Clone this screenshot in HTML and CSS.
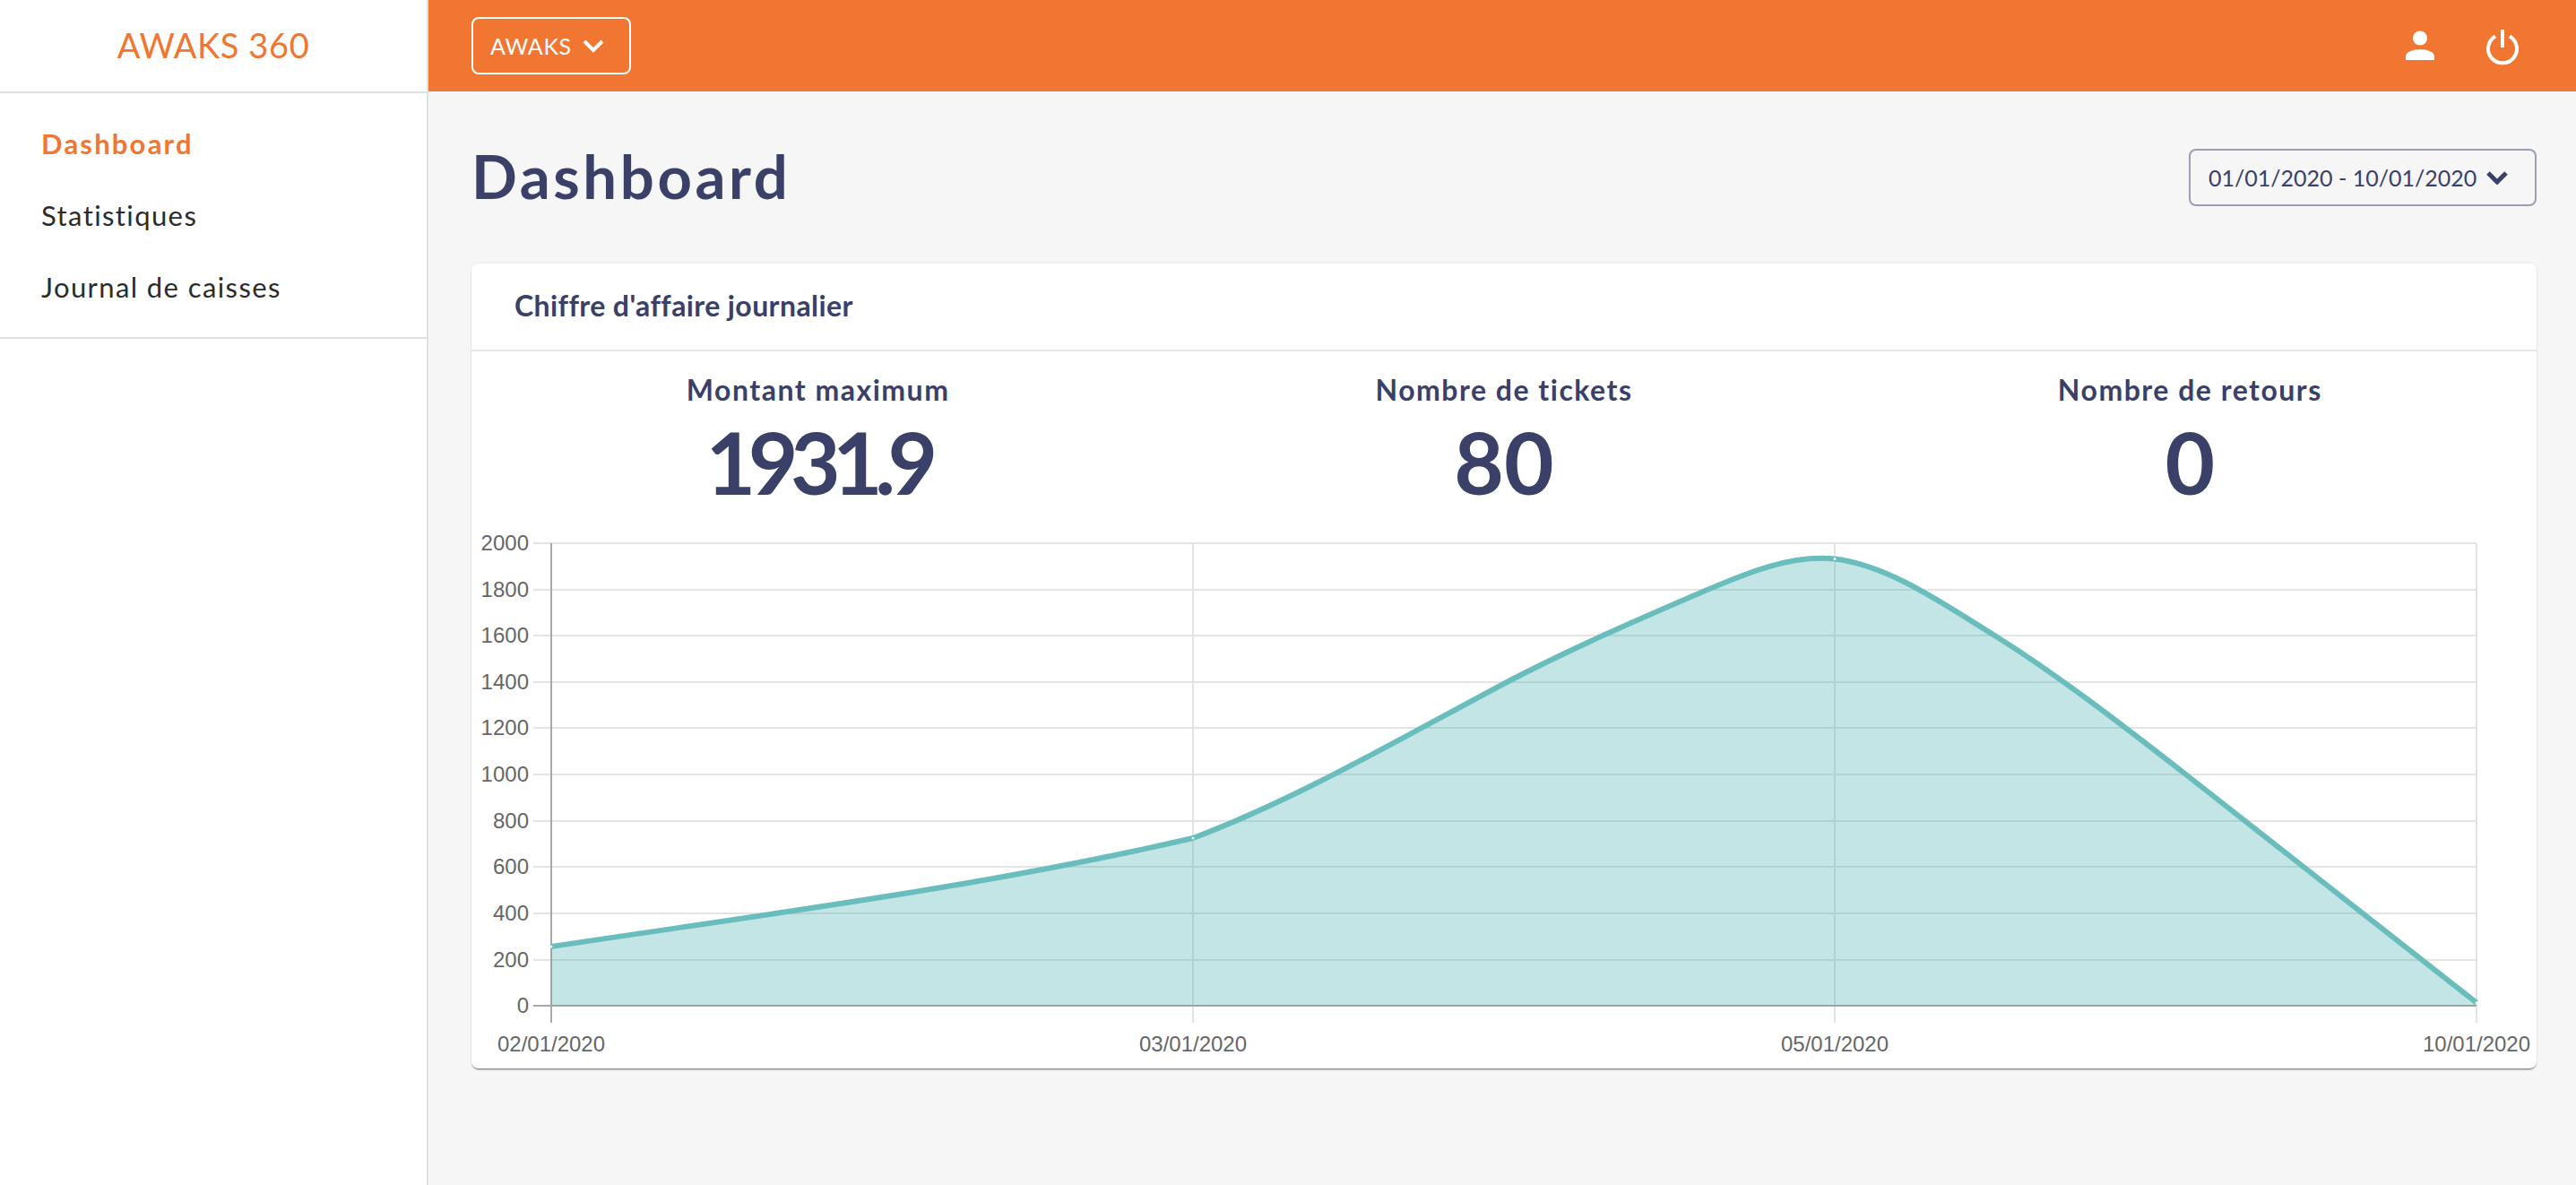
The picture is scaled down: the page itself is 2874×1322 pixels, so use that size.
FILE: index.html
```html
<!DOCTYPE html>
<html lang="fr">
<head>
    <meta charset="UTF-8">
    <meta name="viewport" content="width=device-width, initial-scale=1.0">
    <title>AWAKS 360</title>
    <link rel="stylesheet" href="styles.css">
</head>
<body>
    <aside class="sidebar">
        <div class="brand">AWAKS 360</div>
        <ul class="side-nav">
            <li class="active"><a href="#">Dashboard</a></li>
            <li><a href="#">Statistiques</a></li>
            <li><a href="#">Journal de caisses</a></li>
        </ul>
    </aside>
    <div class="page">
        <header class="topbar">
            <button class="shop-btn" type="button">AWAKS
                <svg class="chevron" viewBox="0 0 24 16"><path d="M2 3l10 10L22 3"/></svg>
            </button>
            <div class="top-icons">
                <svg class="icon-user" viewBox="0 0 32 34"><circle cx="16" cy="8.5" r="8"/><path d="M0 33v-4c0-5 8-8 16-8s16 3 16 8v4z"/></svg>
                <svg class="icon-power" viewBox="0 0 36 36"><path d="M10 7.5a16 16 0 1 0 16 0"/><path d="M18 0v20"/></svg>
            </div>
        </header>
        <main class="content">
            <div class="page-head">
                <h1>Dashboard</h1>
                <button class="date-btn" type="button">01/01/2020 - 10/01/2020
                    <svg class="chevron" viewBox="0 0 24 16"><path d="M2 3l10 10L22 3"/></svg>
                </button>
            </div>
            <section class="card">
                <h2>Chiffre d'affaire journalier</h2>
                <div class="stats">
                    <div class="stat"><p>Montant maximum</p><strong class="tight">1931.9</strong></div>
                    <div class="stat"><p>Nombre de tickets</p><strong>80</strong></div>
                    <div class="stat"><p>Nombre de retours</p><strong>0</strong></div>
                </div>
                <svg class="chart" viewBox="526 586 2304 606">
                    <g class="grid">
                        <path d="M595 606H2763M595 658H2763M595 709H2763M595 761H2763M595 812H2763M595 864H2763M595 916H2763M595 967H2763M595 1019H2763M595 1071H2763"/>
                        <path d="M1331 606V1141M2047 606V1141M2763 606V1141"/>
                    </g>
                    <path class="axis" d="M615 606V1141M595 1122H2763"/>
                    <path class="area" d="M615 1056C854 1020 1092 990 1331 935C1448 891 1566 822 1683 760C1755 722.6 1828 691 1900 660C1949 639 1998 618.6 2047 623.5C2107 630.7 2167 672.8 2227 710C2298 754.7 2369 809.6 2440 865L2763 1118.7V1122H615Z"/>
                    <path class="line" d="M615 1056C854 1020 1092 990 1331 935C1448 891 1566 822 1683 760C1755 722.6 1828 691 1900 660C1949 639 1998 618.6 2047 623.5C2107 630.7 2167 672.8 2227 710C2298 754.7 2369 809.6 2440 865L2763 1118.7"/>
                    <g class="dots">
                        <circle cx="615" cy="1056" r="1.5"/>
                        <circle cx="1331" cy="935" r="1.5"/>
                        <circle cx="2047" cy="623.5" r="1.5"/>
                        <circle cx="2763" cy="1118.7" r="1.5"/>
                    </g>
                    <g class="y-labels">
                        <text x="590" y="614">2000</text>
                        <text x="590" y="666">1800</text>
                        <text x="590" y="717">1600</text>
                        <text x="590" y="769">1400</text>
                        <text x="590" y="820">1200</text>
                        <text x="590" y="872">1000</text>
                        <text x="590" y="924">800</text>
                        <text x="590" y="975">600</text>
                        <text x="590" y="1027">400</text>
                        <text x="590" y="1079">200</text>
                        <text x="590" y="1130">0</text>
                    </g>
                    <g class="x-labels">
                        <text x="615" y="1173">02/01/2020</text>
                        <text x="1331" y="1173">03/01/2020</text>
                        <text x="2047" y="1173">05/01/2020</text>
                        <text x="2763" y="1173">10/01/2020</text>
                    </g>
                </svg>
            </section>
        </main>
    </div>
</body>
</html>
```

FILE: styles.css
```css
* { box-sizing: border-box; }
html, body { height: 100%; }
body { margin: 0; display: flex; overflow: hidden; font-family: Lato, "Open Sans", sans-serif; background-color: #f6f6f6; color: #3a4067; }
button { font-family: inherit; background: none; cursor: pointer; padding: 0; }

/* sidebar */
.sidebar { width: 478px; flex: none; background-color: white; border-right: 2px solid #e0e0e0; }
.brand { height: 104px; padding-bottom: 2px; border-bottom: 2px solid #e0e0e0; display: flex; align-items: center; justify-content: center; color: #f07631; font-size: 38px; font-weight: 400; letter-spacing: .6px; }
.side-nav { list-style: none; margin: 0; padding: 16px 0; border-bottom: 2px solid #e0e0e0; }
.side-nav li { height: 80px; padding-left: 46px; display: flex; align-items: center; }
.side-nav a { color: #2b2b2b; font-size: 31px; font-weight: 400; letter-spacing: 1.4px; text-decoration: none; }
.side-nav .active a { color: #f07631; font-weight: 700; letter-spacing: 2.2px; }

/* top bar */
.page { flex: 1; min-width: 0; }
.topbar { height: 102px; padding: 0 64px 0 48px; background-color: #f07631; display: flex; align-items: center; justify-content: space-between; }
.shop-btn { width: 178px; height: 64px; padding-left: 19px; border: 2px solid white; border-radius: 8px; color: white; font-size: 25px; letter-spacing: .6px; display: flex; align-items: center; gap: 12px; }
.shop-btn .chevron { stroke: white; }
.chevron { width: 24px; height: 16px; flex: none; fill: none; stroke: #3a4067; stroke-width: 4; }
.top-icons { display: flex; align-items: center; gap: 58px; }
.icon-user { width: 32px; height: 34px; fill: white; }
.icon-power { width: 36px; height: 36px; fill: none; stroke: white; stroke-width: 4; overflow: visible; }

/* content */
.content { padding: 64px 44px 0 48px; }
.page-head { height: 64px; margin-bottom: 64px; display: flex; align-items: center; justify-content: space-between; }
h1 { margin: 0 0 4px; font-size: 67px; font-weight: 700; letter-spacing: 3.6px; }
.date-btn { width: 388px; height: 64px; padding-left: 20px; border: 2px solid #9a9eb4; border-radius: 8px; color: #3a4067; font-size: 25px; white-space: nowrap; display: flex; align-items: center; gap: 11px; }
.date-btn .chevron { stroke-width: 5; }

.card { height: 898px; background-color: white; border-radius: 8px; box-shadow: 0 2px 2px -1px rgba(0, 0, 0, .6), 0 0 4px rgba(0, 0, 0, .06); overflow: hidden; }
.card h2 { height: 98px; margin: 0; padding: 0 0 3px 48px; border-bottom: 2px solid #e4e4ea; display: flex; align-items: center; font-size: 32px; font-weight: 700; letter-spacing: .4px; }
.stats { height: 194px; padding: 23px 4px 0; display: grid; grid-template-columns: 1fr 1fr 1fr; text-align: center; }
.stat p { margin: 0; font-size: 32px; line-height: 40px; font-weight: 700; letter-spacing: 1.5px; }
.stat strong { display: block; margin-top: 4px; font-size: 96px; line-height: 112px; font-weight: 700; }
.stat .tight { letter-spacing: -8.5px; }

/* chart */
.chart { display: block; width: 2304px; height: 606px; }
.grid path { fill: none; stroke: #e4e4e4; stroke-width: 2; }
.axis { fill: none; stroke: #a8a8a8; stroke-width: 2; }
.area { fill: rgba(60, 168, 168, .3); }
.line { fill: none; stroke: #69bdbd; stroke-width: 6; }
.dots circle { fill: white; }
.y-labels text, .x-labels text { font-family: "Liberation Sans", Arial, sans-serif; font-size: 24px; fill: #666; }
.y-labels text { text-anchor: end; }
.x-labels text { text-anchor: middle; }
```
